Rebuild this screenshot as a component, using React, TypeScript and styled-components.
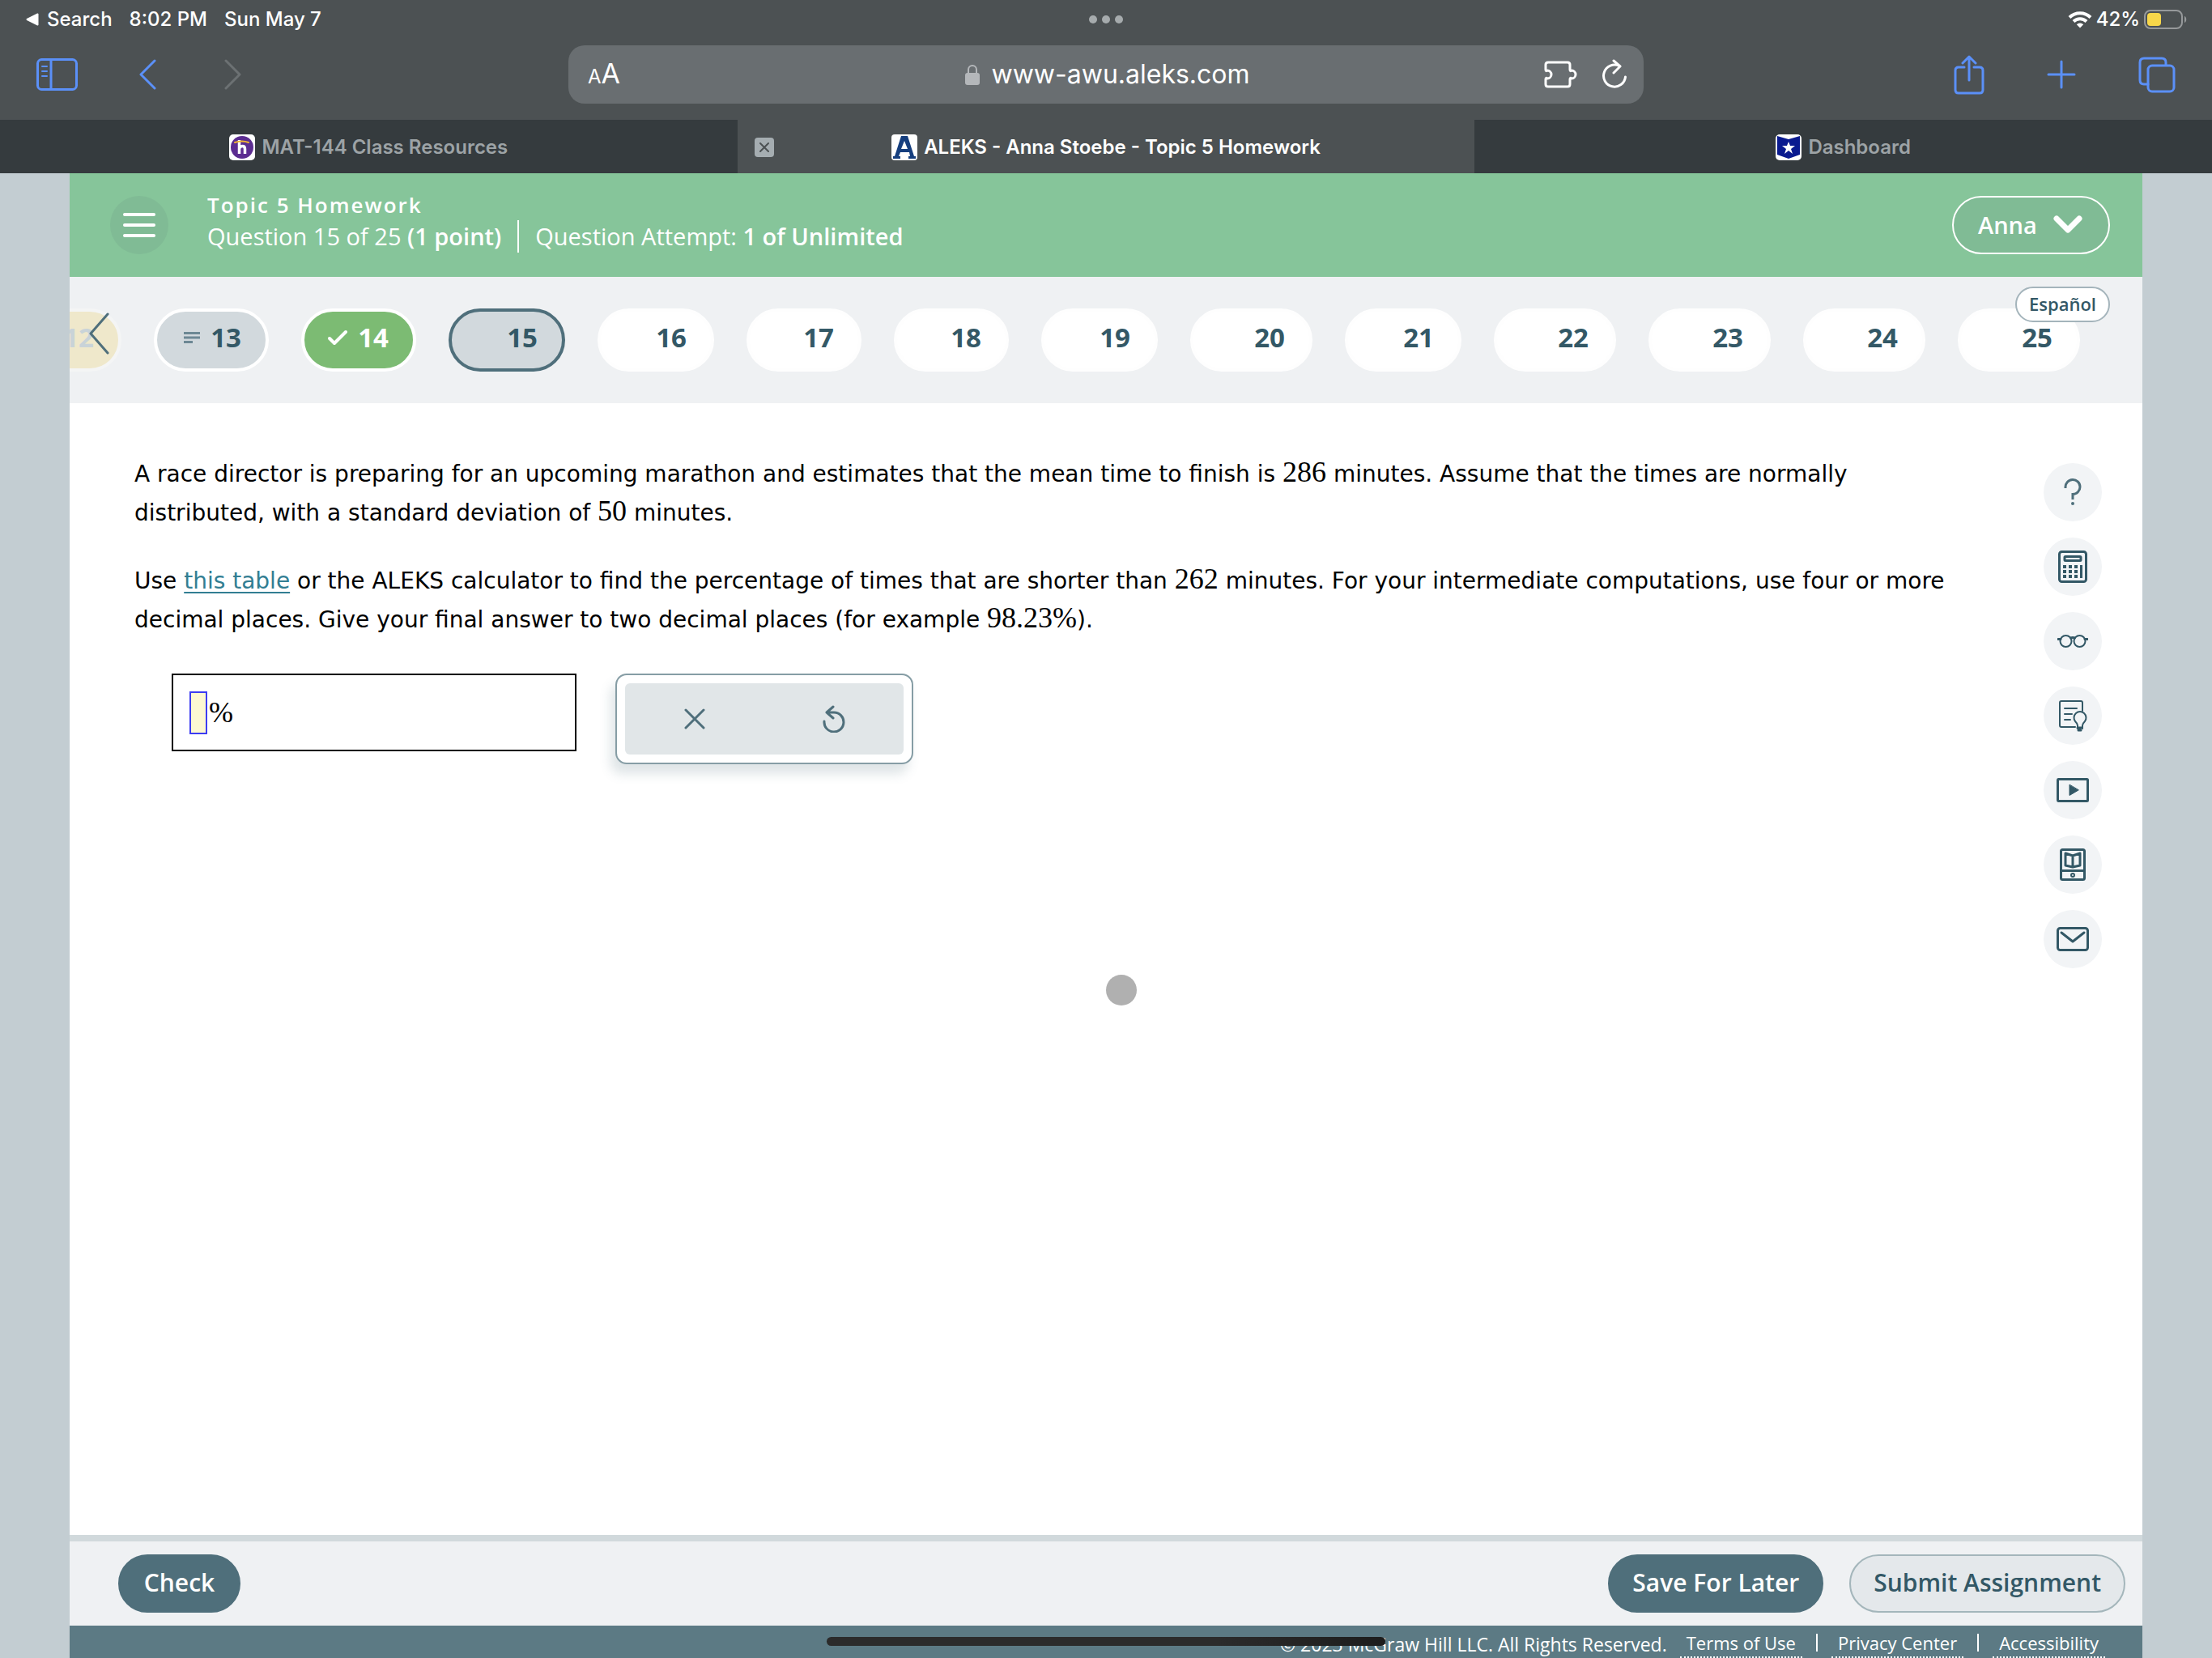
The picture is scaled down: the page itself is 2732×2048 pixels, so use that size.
import React, { useState } from "react";
import styled, { createGlobalStyle, css } from "styled-components";

const ui = `Inter, "Noto Sans", sans-serif`;
const brand = `"Open Sans", "Noto Sans", sans-serif`;
const slate = "#4f6f7b";
const ink = "#335866";

const GlobalStyle = createGlobalStyle`
  *, *::before, *::after { box-sizing: border-box; }
  html, body { margin: 0; padding: 0; }
  body { background: #c3cdd2; font-family: ${brand}; overflow: hidden; }
  button { margin: 0; padding: 0; border: 0; background: none; color: inherit; font: inherit; cursor: pointer; }
  a { color: inherit; text-decoration: none; }
  svg { display: block; flex: none; }
`;

const Screen = styled.div`
  position: relative;
  display: flex;
  flex-direction: column;
  height: 100vh;
`;

/* ---------- Browser chrome ---------- */

const Chrome = styled.header`
  background: #4c5153;
  color: #ffffff;
  font-family: ${ui};
`;

const StatusBar = styled.div`
  display: grid;
  grid-template-columns: 1fr auto 1fr;
  align-items: center;
  height: 48px;
  padding: 0 30px;
  font-size: 24px;
  line-height: 48px;
  font-weight: 500;
`;

const StatusLeft = styled.div`
  display: flex;
  align-items: center;
  gap: 21px;
`;

const BackToApp = styled.button`
  display: flex;
  align-items: center;
  gap: 10px;
`;

const StatusRight = styled.div`
  display: flex;
  align-items: center;
  justify-content: flex-end;
  gap: 5px;
`;

const Multitask = styled.button`
  display: flex;
  gap: 6px;
`;

const Dot = styled.span`
  width: 10px;
  height: 10px;
  border-radius: 50%;
  background: #a6abad;
`;

const Toolbar = styled.div`
  display: grid;
  grid-template-columns: 1fr minmax(0, 1328px) 1fr;
  align-items: center;
  height: 100px;
  padding: 0 45px 12px;
  color: #5b90f8;
`;

const ToolGroup = styled.div<{ $end?: boolean }>`
  display: flex;
  align-items: center;
  gap: ${(p) => (p.$end ? "77px" : "75px")};
  justify-content: ${(p) => (p.$end ? "flex-end" : "flex-start")};
`;

const ToolButton = styled.button<{ $dim?: boolean }>`
  display: flex;
  ${(p) => p.$dim && css`margin-left: 9px; color: #6c7173;`}
`;

const AddressBar = styled.div`
  display: grid;
  grid-template-columns: 1fr auto 1fr;
  align-items: center;
  height: 72px;
  padding: 0 20px 0 24px;
  border-radius: 20px;
  background: #696e71;
  color: #ffffff;
`;

const TextSize = styled.button`
  justify-self: start;
  padding-top: 2px;
  font-size: 34px;
  line-height: 40px;
`;

const SmallA = styled.span`
  font-size: 24px;
`;

const Address = styled.button`
  display: flex;
  align-items: center;
  gap: 14px;
  font-size: 32px;
  line-height: 40px;
`;

const AddressTools = styled.div`
  display: flex;
  align-items: center;
  justify-content: flex-end;
  gap: 28px;
`;

const TabStrip = styled.nav`
  display: grid;
  grid-template-columns: repeat(3, 1fr);
`;

const Tab = styled.div<{ $active?: boolean }>`
  display: grid;
  grid-template-columns: 24px 1fr 24px;
  align-items: center;
  height: 66px;
  padding: 2px 21px 0;
  background: ${(p) => (p.$active ? "transparent" : "#353b3e")};
  color: ${(p) => (p.$active ? "#ffffff" : "#9da3a6")};
`;

const TabTitle = styled.a`
  grid-column: 2;
  display: flex;
  align-items: center;
  justify-content: center;
  gap: 8px;
  font-size: 24px;
  line-height: 32px;
  font-weight: 600;
  white-space: nowrap;
`;

const CloseTab = styled.button`
  display: grid;
  place-items: center;
  width: 24px;
  height: 24px;
  border-radius: 4px;
  background: #a5adb1;
  color: #4c5153;
`;

/* ---------- Assignment page ---------- */

const Page = styled.div`
  display: flex;
  flex: 1;
  flex-direction: column;
  min-height: 0;
  margin: 0 86px;
  background: #ffffff;
`;

const Banner = styled.div`
  display: flex;
  align-items: center;
  padding: 20px 40px 20px 50px;
  background: #86c59a;
  color: #ffffff;
`;

const MenuButton = styled.button`
  display: flex;
  flex-direction: column;
  align-items: center;
  justify-content: center;
  gap: 9px;
  width: 72px;
  height: 72px;
  border-radius: 50%;
  background: #80bb95;
`;

const MenuBar = styled.span`
  width: 40px;
  height: 4px;
  border-radius: 2px;
  background: #ffffff;
`;

const Titles = styled.div`
  flex: 1;
  margin-left: 48px;
  padding-bottom: 10px;
`;

const Topic = styled.h1`
  margin: 0;
  font-size: 26px;
  line-height: 38px;
  font-weight: 600;
  letter-spacing: 2px;
`;

const Progress = styled.p`
  display: flex;
  margin: 0;
  font-size: 29px;
  line-height: 40px;
`;

const Attempt = styled.span`
  margin-left: 20px;
  padding-left: 20px;
  border-left: 2px solid #ffffff;
`;

const Strong = styled.b`
  font-weight: 600;
`;

const UserButton = styled.button`
  display: flex;
  align-items: center;
  justify-content: space-between;
  width: 195px;
  height: 72px;
  padding: 0 31px 2px 30px;
  border: 2px solid #ffffff;
  border-radius: 36px;
  background: #80bb95;
  font-size: 29px;
  font-weight: 600;
`;

const QuestionNav = styled.nav`
  position: relative;
  height: 156px;
  padding-top: 39px;
  background: #eff1f3;
`;

const PillTrack = styled.div`
  display: flex;
  gap: 40px;
  height: 78px;
  overflow: hidden;
`;

type PillState = "done" | "correct" | "current" | "open" | "partial";

const pillSkin = {
  partial: css`margin-left: -80px; background: #efe8cb; border-color: #f4f5f5; color: #c9d3d8;`,
  done: css`background: #d2d9dd; border-color: #ffffff;`,
  correct: css`background: #7cbb73; border-color: #ffffff; color: #ffffff;`,
  current: css`background: #d2d9dd; border-color: ${slate};`,
  open: css`background: #ffffff; border-color: #fefefe;`,
};

const Pill = styled.button<{ $state: PillState; $size: "s" | "m" | "l" }>`
  display: flex;
  flex: none;
  align-items: center;
  justify-content: flex-end;
  gap: 13px;
  width: ${(p) => ({ s: "142px", m: "144px", l: "151px" })[p.$size]};
  height: 78px;
  padding: 0 30px 6px 0;
  border: 4px solid;
  border-radius: 39px;
  color: ${ink};
  font-size: 33px;
  line-height: 40px;
  font-weight: 700;
  ${(p) => pillSkin[p.$state]}
`;

const Previous = styled.button`
  position: absolute;
  left: 23px;
  top: 43px;
  color: ${slate};
`;

const Language = styled.button`
  position: absolute;
  right: 40px;
  top: 12px;
  height: 44px;
  padding: 0 15px 2px;
  border: 2px solid #a4b4bb;
  border-radius: 22px;
  background: #ffffff;
  color: ${ink};
  font-size: 22px;
  line-height: 36px;
  font-weight: 600;
`;

const Main = styled.main`
  display: flex;
  flex: 1;
  justify-content: space-between;
  padding: 64px 50px 0 80px;
`;

const Problem = styled.section`
  flex: 0 1 2274px;
  font-family: "DejaVu Sans", sans-serif;
  font-size: 28px;
  line-height: 48px;
  color: #000000;
`;

const Paragraph = styled.p`
  margin: 0 0 36px;
`;

const Num = styled.span`
  font-family: "Liberation Serif", serif;
  font-size: 36px;
  line-height: 36px;
`;

const TableLink = styled.a`
  color: #327e93;
  text-decoration: underline;
  text-decoration-thickness: 2px;
  text-underline-offset: 4px;
`;

const AnswerRow = styled.div`
  display: flex;
  align-items: flex-start;
  gap: 48px;
  margin: 42px 0 0 46px;
`;

const AnswerBox = styled.label`
  display: flex;
  align-items: center;
  gap: 2px;
  width: 500px;
  height: 96px;
  padding: 0 20px;
  border: 2px solid #000000;
`;

const AnswerInput = styled.input`
  width: 22px;
  height: 53px;
  padding: 0;
  border: 2px solid #3c3cf2;
  border-radius: 0;
  outline: 0;
  background: #fdf8d2;
  font-family: "Liberation Serif", serif;
  font-size: 36px;
`;

const Palette = styled.div`
  width: 368px;
  padding: 10px;
  border: 2px solid #869da5;
  border-radius: 14px;
  background: #ffffff;
  box-shadow: -6px 12px 14px rgba(79, 111, 123, 0.18);
`;

const PaletteKeys = styled.div`
  display: grid;
  grid-template-columns: 1fr 1fr;
  height: 88px;
  border-radius: 6px;
  background: #e1e6e8;
  color: ${slate};
`;

const PaletteKey = styled.button`
  display: grid;
  place-items: center;
`;

const Tools = styled.aside`
  display: flex;
  flex-direction: column;
  gap: 20px;
  padding-top: 10px;
`;

const Tool = styled.button`
  display: grid;
  place-items: center;
  width: 72px;
  height: 72px;
  border-radius: 50%;
  background: #f2f4f6;
  color: ${ink};
`;

const Actions = styled.div`
  display: flex;
  align-items: center;
  gap: 32px;
  height: 112px;
  padding: 0 21px 0 60px;
  border-top: 8px solid #d1d9dc;
  background: #eff1f3;
`;

const ActionButton = styled.button<{ $outline?: boolean; $first?: boolean }>`
  min-width: 151px;
  height: 72px;
  padding: 0 28px 2px;
  border: 2px solid ${(p) => (p.$outline ? "#a4b6bb" : slate)};
  border-radius: 36px;
  background: ${(p) => (p.$outline ? "#e4e8eb" : slate)};
  color: ${(p) => (p.$outline ? ink : "#ffffff")};
  font-size: 30px;
  line-height: 40px;
  font-weight: 600;
  margin-right: ${(p) => (p.$first ? "auto" : "0")};
`;

const Legal = styled.footer`
  display: flex;
  align-items: flex-start;
  justify-content: flex-end;
  height: 40px;
  padding: 8px 46px 0 0;
  background: #5c7a84;
  color: #ffffff;
  font-size: 22px;
  line-height: 26px;
`;

const Copyright = styled.span`
  margin-right: 16px;
  padding-top: 2px;
  font-size: 23px;
`;

const LegalLink = styled.a`
  height: 32px;
  padding: 0 8px;
  border-bottom: 2px dotted #ffffff;
`;

const Rule = styled.span`
  width: 2px;
  height: 22px;
  margin: 2px 17px 0;
  background: #ffffff;
`;

/* ---------- System overlays ---------- */

const Pointer = styled.div`
  position: absolute;
  left: 50%;
  top: 1204px;
  width: 38px;
  height: 38px;
  border-radius: 50%;
  background: #b0b0b0;
`;

const HomeIndicator = styled.div`
  position: absolute;
  left: 50%;
  bottom: 15px;
  width: 690px;
  height: 11px;
  margin-left: -345px;
  border-radius: 6px;
  background: linear-gradient(90deg, #2b2b2b 70%, #1d1d1d);
`;

/* ---------- Icons ---------- */

type LineProps = { w: number; h: number; sw?: number; children: React.ReactNode };

const Line = ({ w, h, sw = 3, children }: LineProps) => (
  <svg
    width={w}
    height={h}
    viewBox={`0 0 ${w} ${h}`}
    fill="none"
    stroke="currentColor"
    strokeWidth={sw}
    strokeLinecap="round"
    strokeLinejoin="round"
    aria-hidden="true"
  >
    {children}
  </svg>
);

const BackTriangle = () => (
  <Line w={18} h={16} sw={2}>
    <path d="M3.500 8 16.500 1.500v13z" fill="currentColor" />
  </Line>
);

const WifiIcon = () => (
  <svg width="30" height="22" viewBox="0 0 30 22" fill="none" stroke="currentColor" aria-hidden="true">
    <path d="M2 8.500a18.500 18.500 0 0 1 26 0" strokeWidth="4" />
    <path d="M7 13.500a11.500 11.500 0 0 1 16 0" strokeWidth="4" />
    <path d="M15 21.500 10.800 17.200a6 6 0 0 1 8.400 0z" fill="currentColor" stroke="none" />
  </svg>
);

const BatteryIcon = () => (
  <svg width="54" height="24" viewBox="0 0 54 24" aria-hidden="true">
    <rect x="1" y="1" width="46" height="22" rx="7" fill="none" stroke="#96999b" strokeWidth="2" />
    <path d="M50 8c3 1 3 7 0 8z" fill="#96999b" />
    <rect x="4" y="4" width="17" height="16" rx="4" fill="#f8d74a" />
  </svg>
);

const SidebarIcon = () => (
  <Line w={51} h={40}>
    <rect x="1.500" y="1.500" width="48" height="37" rx="5" />
    <path d="M18 2v36" />
    <path d="M7 10h6M7 16h6M7 22h6" strokeWidth="2" />
  </Line>
);

const ChevronLeftIcon = () => (
  <Line w={22} h={38}>
    <path d="M20 2 3 19l17 17" />
  </Line>
);

const ChevronRightIcon = () => (
  <Line w={22} h={38}>
    <path d="m2 2 17 17L2 36" />
  </Line>
);

const LockIcon = () => (
  <svg width="18" height="26" viewBox="0 0 18 26" fill="#b4b7ba" aria-hidden="true">
    <rect y="11" width="18" height="15" rx="3" />
    <path d="M4 12V7a5 5 0 0 1 10 0v5" fill="none" stroke="#b4b7ba" strokeWidth="2" />
  </svg>
);

const PuzzleIcon = () => (
  <Line w={43} h={34}>
    <path d="M5 2h24q3 0 3 3v6c0 2 1 2 2 1a5 5 0 1 1 0 10c-1-1-2-1-2 1v6q0 3-3 3H5q-3 0-3-3v-6c0-2 1-2 2-1 a5 5 0 1 0 0-10c-1 1-2 1-2-1V5q0-3 3-3z" />
  </Line>
);

const ReloadIcon = () => (
  <Line w={32} h={38}>
    <path d="M22 8.500A13.500 13.500 0 1 0 29.500 22" />
    <path d="M15 2l8 7-8 8" />
  </Line>
);

const ShareIcon = () => (
  <Line w={38} h={49}>
    <path d="M13 15H6q-4 0-4 4v24q0 4 4 4h26q4 0 4-4V19q0-4-4-4h-7M19 31V2M11 10l8-8 8 8" />
  </Line>
);

const PlusIcon = () => (
  <Line w={36} h={36}>
    <path d="M18 2v32M2 18h32" />
  </Line>
);

const TabsIcon = () => (
  <Line w={46} h={45}>
    <path d="M12 34H7q-5 0-5-5V7q0-5 5-5h22q5 0 5 5v3" />
    <rect x="12" y="11" width="32" height="32" rx="5" />
  </Line>
);

const HonorFavicon = () => (
  <svg width="32" height="32" viewBox="0 0 32 32" aria-hidden="true">
    <rect width="32" height="32" rx="5" fill="#ffffff" />
    <circle cx="16" cy="16" r="14" fill="#5c2d91" />
    <path d="M12.500 7v17M12.500 17.500q1-3 4-3 3 0 3 3.500v6" fill="none" stroke="#ffffff" strokeWidth="3.500" />
    <path d="M7 10q9-3 17 0" fill="none" stroke="#f2b632" strokeWidth="2" strokeLinecap="round" />
  </svg>
);

const AleksFavicon = () => (
  <svg width="32" height="32" viewBox="0 0 32 32" aria-hidden="true">
    <rect width="32" height="32" rx="4" fill="#ffffff" />
    <path
      d="M12 2h8l8 25h2v3h-9v-3h2l-1-5H11l-2 5h2v3H2v-3h2zM16 8l-4 10h8z"
      fill="#153e7e"
      fillRule="evenodd"
    />
  </svg>
);

const BadgeFavicon = () => (
  <svg width="32" height="32" viewBox="0 0 32 32" aria-hidden="true">
    <rect width="32" height="32" rx="5" fill="#ffffff" />
    <path d="M2 2l14 4 14-4v23l-14 5-14-5z" fill="#0a1a8f" />
    <path d="m16 9 2 5h6l-5 4 2 6-5-4-5 4 2-6-5-4h6z" fill="#ffffff" />
  </svg>
);

const CloseSmall = () => (
  <Line w={12} h={12} sw={2}>
    <path d="m1 1 10 10M11 1 1 11" />
  </Line>
);

const UserChevron = () => (
  <Line w={38} h={24} sw={7}>
    <path d="m5 5 14 14L33 5" />
  </Line>
);

const LinesIcon = () => (
  <svg width="20" height="14" viewBox="0 0 20 14" fill="#6d8894" aria-hidden="true">
    <path d="M0 0h20v3H0zM0 5.500h20v3H0zM0 11h11v3H0z" />
  </svg>
);

const TickIcon = () => (
  <Line w={24} h={20} sw={4}>
    <path d="m2 11 6 6L22 3" />
  </Line>
);

const PrevChevron = () => (
  <Line w={26} h={54} sw={3}>
    <path d="M24 3 3 27l21 24" />
  </Line>
);

const ClearIcon = () => (
  <Line w={26} h={26}>
    <path d="m2 2 22 22M24 2 2 24" />
  </Line>
);

const UndoIcon = () => (
  <Line w={28} h={34}>
    <path d="M2 20a12 12 0 1 0 12-11H5M13 2 5 9l8 7" />
  </Line>
);

const HelpIcon = () => (
  <svg width="24" height="34" viewBox="0 0 24 34" fill="none" stroke={slate} strokeWidth="3" aria-hidden="true">
    <path d="M3 12V11a9 9 0 1 1 9 8.500V26" />
    <circle cx="12" cy="31" r="2" fill={slate} stroke="none" />
  </svg>
);

const CalculatorIcon = () => (
  <svg width="36" height="40" viewBox="0 0 36 40" fill="none" stroke="currentColor" strokeWidth="3" aria-hidden="true">
    <rect x="1.500" y="1.500" width="33" height="37" rx="3" />
    <rect x="8" y="7.500" width="20" height="5" rx="1" />
    <path d="M6 20h4M13 20h4M20 20h4M6 26h4M13 26h4M20 26h4M6 32h4M13 32h4M20 32h4" strokeWidth="4" />
    <path d="M28.500 18v16" />
  </svg>
);

const GlassesIcon = () => (
  <Line w={38} h={18} sw={2}>
    <circle cx="10.500" cy="9" r="7" />
    <circle cx="27.500" cy="9" r="7" />
    <path d="M1 6.500h3M34 6.500h3M16.500 5q2.500-1 5 0" strokeWidth="3" />
  </Line>
);

const HintIcon = () => (
  <Line w={36} h={40} sw={2}>
    <path d="M21 34H4q-2 0-2-2V4q0-2 2-2h24q2 0 2 2v10" />
    <path d="M8 11h15M8 18h9M8 25h7" />
    <path d="M24 36v-4q0-2-3-5a7.500 7.500 0 1 1 12 0q-3 3-3 5v4" />
    <path d="M24 35h5M25 38h3" strokeWidth="3" />
  </Line>
);

const VideoIcon = () => (
  <Line w={40} h={30}>
    <rect x="1.500" y="1.500" width="37" height="27" rx="1" />
    <path d="M16 8.500v13L27 15z" fill="currentColor" strokeWidth="1" />
  </Line>
);

const BookIcon = () => (
  <Line w={32} h={40}>
    <rect x="1.500" y="1.500" width="29" height="37" rx="2" />
    <path d="M2 27.500h28" />
    <path d="M16 23 7 21V6l9 3 9-3v15l-9 2V9" />
    <circle cx="16" cy="33" r="2" strokeWidth="2" />
  </Line>
);

const MailIcon = () => (
  <Line w={40} h={30}>
    <rect x="1.500" y="1.500" width="37" height="27" rx="3" />
    <path d="m6 7 14 11L34 7" />
  </Line>
);

/* ---------- Data ---------- */

const questions: { n: number; state: PillState; size: "s" | "m" | "l"; icon?: React.ReactNode }[] = [
  { n: 12, state: "partial", size: "m" },
  { n: 13, state: "done", size: "s", icon: <LinesIcon /> },
  { n: 14, state: "correct", size: "s", icon: <TickIcon /> },
  { n: 15, state: "current", size: "m" },
  { n: 16, state: "open", size: "m" },
  { n: 17, state: "open", size: "s" },
  { n: 18, state: "open", size: "s" },
  { n: 19, state: "open", size: "m" },
  { n: 20, state: "open", size: "l" },
  { n: 21, state: "open", size: "m" },
  { n: 22, state: "open", size: "l" },
  { n: 23, state: "open", size: "l" },
  { n: 24, state: "open", size: "l" },
  { n: 25, state: "open", size: "l" },
];

const tools = [
  { name: "Help", icon: <HelpIcon /> },
  { name: "Calculator", icon: <CalculatorIcon /> },
  { name: "View example", icon: <GlassesIcon /> },
  { name: "Hint", icon: <HintIcon /> },
  { name: "Video", icon: <VideoIcon /> },
  { name: "Textbook", icon: <BookIcon /> },
  { name: "Message", icon: <MailIcon /> },
];

function BrowserChrome() {
  return (
    <Chrome>
      <StatusBar>
        <StatusLeft>
          <BackToApp>
            <BackTriangle />
            Search
          </BackToApp>
          <span>8:02 PM</span>
          <span>Sun May 7</span>
        </StatusLeft>
        <Multitask aria-label="Multitasking">
          <Dot />
          <Dot />
          <Dot />
        </Multitask>
        <StatusRight>
          <WifiIcon />
          <span>42%</span>
          <BatteryIcon />
        </StatusRight>
      </StatusBar>
      <Toolbar>
        <ToolGroup>
          <ToolButton aria-label="Sidebar"><SidebarIcon /></ToolButton>
          <ToolButton aria-label="Back"><ChevronLeftIcon /></ToolButton>
          <ToolButton $dim aria-label="Forward"><ChevronRightIcon /></ToolButton>
        </ToolGroup>
        <AddressBar>
          <TextSize aria-label="Text size"><SmallA>A</SmallA>A</TextSize>
          <Address>
            <LockIcon />
            www-awu.aleks.com
          </Address>
          <AddressTools>
            <ToolButton aria-label="Extensions"><PuzzleIcon /></ToolButton>
            <ToolButton aria-label="Reload"><ReloadIcon /></ToolButton>
          </AddressTools>
        </AddressBar>
        <ToolGroup $end>
          <ToolButton aria-label="Share"><ShareIcon /></ToolButton>
          <ToolButton aria-label="New tab"><PlusIcon /></ToolButton>
          <ToolButton aria-label="Tabs"><TabsIcon /></ToolButton>
        </ToolGroup>
      </Toolbar>
      <TabStrip>
        <Tab>
          <TabTitle href="#resources"><HonorFavicon />MAT-144 Class Resources</TabTitle>
        </Tab>
        <Tab $active>
          <CloseTab aria-label="Close tab"><CloseSmall /></CloseTab>
          <TabTitle href="#aleks"><AleksFavicon />ALEKS - Anna Stoebe - Topic 5 Homework</TabTitle>
        </Tab>
        <Tab>
          <TabTitle href="#dashboard"><BadgeFavicon />Dashboard</TabTitle>
        </Tab>
      </TabStrip>
    </Chrome>
  );
}

export default function App() {
  const [answer, setAnswer] = useState("");

  return (
    <Screen>
      <GlobalStyle />
      <BrowserChrome />
      <Page>
        <Banner>
          <MenuButton aria-label="Menu">
            <MenuBar />
            <MenuBar />
            <MenuBar />
          </MenuButton>
          <Titles>
            <Topic>Topic 5 Homework</Topic>
            <Progress>
              <span>Question 15 of 25 <Strong>(1 point)</Strong></span>
              <Attempt>Question Attempt: <Strong>1 of Unlimited</Strong></Attempt>
            </Progress>
          </Titles>
          <UserButton>
            Anna
            <UserChevron />
          </UserButton>
        </Banner>
        <QuestionNav aria-label="Questions">
          <PillTrack>
            {questions.map((q) => (
              <Pill key={q.n} $state={q.state} $size={q.size}>
                {q.icon}
                {q.n}
              </Pill>
            ))}
          </PillTrack>
          <Previous aria-label="Previous questions"><PrevChevron /></Previous>
          <Language>Español</Language>
        </QuestionNav>
        <Main>
          <Problem>
            <Paragraph>
              A race director is preparing for an upcoming marathon and estimates that the mean time to finish is{" "}
              <Num>286</Num> minutes. Assume that the times are normally distributed, with a standard deviation of{" "}
              <Num>50</Num> minutes.
            </Paragraph>
            <Paragraph>
              Use <TableLink href="#table">this table</TableLink> or the ALEKS calculator to find the percentage of
              times that are shorter than <Num>262</Num> minutes. For your intermediate computations, use four or more
              decimal places. Give your final answer to two decimal places (for example <Num>98.23%</Num>).
            </Paragraph>
            <AnswerRow>
              <AnswerBox>
                <AnswerInput
                  aria-label="Answer in percent"
                  value={answer}
                  onChange={(e) => setAnswer(e.target.value)}
                />
                <Num>%</Num>
              </AnswerBox>
              <Palette>
                <PaletteKeys>
                  <PaletteKey aria-label="Clear" onClick={() => setAnswer("")}><ClearIcon /></PaletteKey>
                  <PaletteKey aria-label="Undo"><UndoIcon /></PaletteKey>
                </PaletteKeys>
              </Palette>
            </AnswerRow>
          </Problem>
          <Tools>
            {tools.map((t) => (
              <Tool key={t.name} aria-label={t.name}>{t.icon}</Tool>
            ))}
          </Tools>
        </Main>
        <Actions>
          <ActionButton $first>Check</ActionButton>
          <ActionButton>Save For Later</ActionButton>
          <ActionButton $outline>Submit Assignment</ActionButton>
        </Actions>
        <Legal>
          <Copyright>© 2023 McGraw Hill LLC. All Rights Reserved.</Copyright>
          <LegalLink href="#terms">Terms of Use</LegalLink>
          <Rule />
          <LegalLink href="#privacy">Privacy Center</LegalLink>
          <Rule />
          <LegalLink href="#accessibility">Accessibility</LegalLink>
        </Legal>
      </Page>
      <Pointer />
      <HomeIndicator />
    </Screen>
  );
}
